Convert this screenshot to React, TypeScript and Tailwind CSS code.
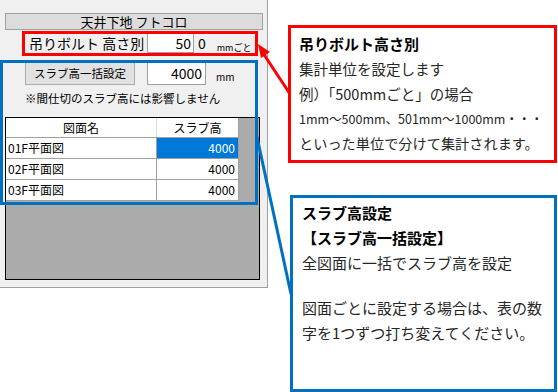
import React from "react";

const jp = { fontFamily: '"Noto Sans CJK JP", "Noto Sans", sans-serif' };

function LeftPanel() {
  const rows = ["01F平面図", "02F平面図", "03F平面図"];
  return (
    <div className="relative w-[268px] h-[288px] shrink-0 bg-[#f0f0f0] border-r border-b border-[#a0a0a0] text-black" style={jp}>
      <div className="flex flex-col pt-[13px]">
        <div className="ml-[5px] w-[258px] h-[17px] bg-[#dcdcdc] border border-[#a0a0a0] text-center text-[13px] leading-[15px]">
          天井下地 フトコロ
        </div>
        <div className="mt-[3px] h-[20px] flex items-center pl-[29px]">
          <div className="w-[118px] text-[14px] leading-[16px] whitespace-nowrap">吊りボルト 高さ別</div>
          <div className="w-[47px] h-[20px] bg-white border border-[#a0a0a0] text-right pr-[2px] text-[14px] leading-[18px]">50</div>
          <div className="ml-[4px] text-[14px] leading-[18px]">0</div>
          <div className="ml-[11px] self-end text-[9px] leading-[11px] whitespace-nowrap">mmごと</div>
        </div>
        <div className="mt-[9px] h-[23px] flex items-center pl-[25px]">
          <div className="w-[110px] h-[23px] bg-[#e1e1e1] border border-[#adadad] text-center text-[11.5px] leading-[21px]">スラブ高一括設定</div>
          <div className="ml-[12px] w-[59px] h-[23px] bg-white border border-[#a0a0a0] text-right pr-[3px] text-[14px] leading-[21px]">4000</div>
          <div className="ml-[10px] mt-[6px] text-[10px] leading-[12px]">mm</div>
        </div>
        <div className="mt-[5px] pl-[25px] text-[11.5px] leading-[16px] whitespace-nowrap">※間仕切のスラブ高には影響しません</div>
        <div className="mt-[11px] ml-[5px] w-[255px] h-[163px] border border-black bg-[#ababab]">
          <div className="flex h-[20px] w-[233px] bg-white border-b border-[#a0a0a0] text-[12px] leading-[19px]">
            <div className="w-[151px] border-r border-[#dcdcdc] text-center">図面名</div>
            <div className="w-[82px] border-r border-[#a0a0a0] text-center">スラブ高</div>
          </div>
          {rows.map((r, i) => (
            <div key={r} className="flex h-[21px] w-[233px] bg-white border-b border-[#a0a0a0] text-[12px] leading-[20px]">
              <div className="w-[151px] border-r border-[#a0a0a0] pl-[2px]">{r}</div>
              <div className={i === 0 ? "w-[82px] border-r border-[#a0a0a0] bg-[#0078d7] text-white text-right pr-[3px]" : "w-[82px] border-r border-[#a0a0a0] text-right pr-[3px]"}>4000</div>
            </div>
          ))}
        </div>
      </div>
      <div className="absolute left-[22px] top-[31px] w-[236px] h-[25px] border-[3px] border-[#ff0000]" />
      <div className="absolute left-0 top-[60px] w-[258px] h-[145px] border-[3px] border-[#0070c0]" />
    </div>
  );
}

export default function App() {
  return (
    <div className="relative w-[558px] h-[392px] bg-white overflow-hidden flex" style={jp}>
      <LeftPanel />
      <div className="flex flex-col">
        <div className="mt-[25px] ml-[20px] w-[269px] h-[138px] border-[3px] border-[#ff0000] bg-white pl-[8px] pt-[3px] text-[#262626] whitespace-nowrap">
          <div className="text-[15px] leading-[25px] font-bold text-black">吊りボルト高さ別</div>
          <div className="text-[14.5px] leading-[25px]">集計単位を設定します</div>
          <div className="text-[14.5px] leading-[25px]">例）「500mmごと」の場合</div>
          <div className="text-[12.5px] leading-[25px]">1mm～500mm、501mm～1000mm・・・</div>
          <div className="text-[14.2px] leading-[25px]">といった単位で分けて集計されます。</div>
        </div>
        <div className="mt-[32px] ml-[22px] w-[267px] h-[197px] border-[3px] border-[#0070c0] bg-white pl-[9px] pt-[3px] text-[#262626] whitespace-nowrap">
          <div className="text-[15px] leading-[24px] font-bold text-black">スラブ高設定</div>
          <div className="text-[15px] leading-[26px] font-bold text-black">【スラブ高一括設定】</div>
          <div className="text-[15px] leading-[24px]">全図面に一括でスラブ高を設定</div>
          <div className="h-[20px]" />
          <div className="text-[15px] leading-[25px]">図面ごとに設定する場合は、表の数</div>
          <div className="text-[15px] leading-[25px]">字を1つずつ打ち変えてください。</div>
        </div>
      </div>
      <svg className="absolute left-0 top-0 pointer-events-none" width="558" height="392" viewBox="0 0 558 392">
        <line x1="290" y1="94" x2="263" y2="53" stroke="#ff0000" strokeWidth="3" />
        <polygon points="258,44 270,52 261,58" fill="#ff0000" />
        <line x1="291" y1="294" x2="257" y2="137" stroke="#0070c0" strokeWidth="3" />
      </svg>
    </div>
  );
}
